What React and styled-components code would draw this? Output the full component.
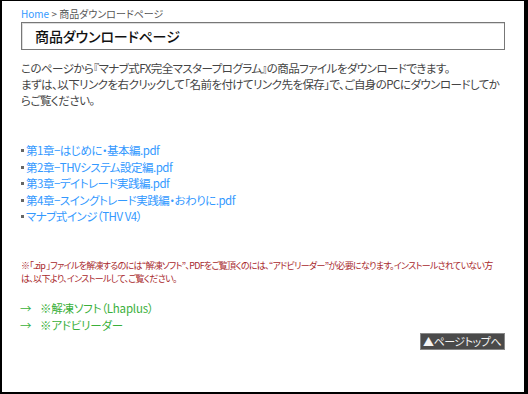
import React from 'react';
import styled, { createGlobalStyle } from 'styled-components';

const GlobalStyle = createGlobalStyle`
  html, body {
    margin: 0;
    padding: 0;
    background: #000;
  }
  body {
    font-family: "Noto Sans CJK JP", "Liberation Sans", sans-serif;
    font-feature-settings: "palt";
  }
`;

const Frame = styled.div`
  box-sizing: border-box;
  width: 528px;
  height: 394px;
  border-style: solid;
  border-color: #000;
  border-width: 1px 4px 2px 2px;
  background: #fff;
  padding: 6px 19px 0 18px;
  color: #444;
  overflow: hidden;
`;

const Breadcrumb = styled.div`
  font-size: 10px;
  line-height: 13px;
  color: #555;
  margin-left: 1px;

  a {
    color: #3399ff;
    text-decoration: none;
  }
`;

const Title = styled.h2`
  margin: 2px 0 0 1px;
  height: 28px;
  box-sizing: border-box;
  border: 1px solid #777;
  box-shadow: inset 1px 1px 0 #ddd;
  padding: 0 0 0 13px;
  font-size: 14px;
  font-weight: 500;
  line-height: 26px;
  color: #111;
  letter-spacing: -0.1px;
`;

const Lead = styled.p`
  margin: 10px 0 0 1px;
  font-size: 11.5px;
  line-height: 16px;
  letter-spacing: -0.55px;
  white-space: nowrap;
`;

const FileList = styled.ul`
  list-style: none;
  margin: 34px 0 0 1px;
  padding: 0;
  font-size: 11.5px;
  line-height: 16.5px;
  letter-spacing: -0.5px;
`;

const FileItem = styled.li`
  display: flex;
  align-items: center;

  &::before {
    content: '';
    width: 3px;
    height: 3px;
    background: #666;
    margin: 1px 2px 0 0;
  }

  a {
    color: #3399ff;
    text-decoration: none;
  }
`;

const Note = styled.p`
  margin: 34px 0 0 1px;
  font-size: 9px;
  line-height: 13px;
  color: #a8282c;
  letter-spacing: -0.7px;
  white-space: nowrap;
`;

const SoftList = styled.ul`
  list-style: none;
  margin: 15px 0 0 0;
  padding: 0;
  font-size: 11.5px;
  line-height: 17px;
  letter-spacing: -0.2px;
`;

const SoftItem = styled.li`
  color: #3ab03a;

  span {
    display: inline-block;
    width: 20px;
  }

  a {
    color: #3ab03a;
    text-decoration: none;
  }
`;

const TopBar = styled.div`
  display: flex;
  justify-content: flex-end;
  margin-top: -1px;
`;

const TopButton = styled.a`
  display: inline-block;
  background: #4a4a4a;
  border: 1px solid #888;
  color: #f4f4f4;
  font-size: 11px;
  line-height: 15px;
  letter-spacing: -0.5px;
  padding: 0 3px 0 2px;
  text-decoration: none;
`;

const files = [
  '第1章−はじめに・基本編.pdf',
  '第2章−THVシステム設定編.pdf',
  '第3章−デイトレード実践編.pdf',
  '第4章−スイングトレード実践編・おわりに.pdf',
  'マナブ式インジ（THV V4）',
];

const softs = ['※解凍ソフト（Lhaplus）', '※アドビリーダー'];

export default function App() {
  return (
    <>
      <GlobalStyle />
      <Frame>
        <Breadcrumb>
          <a href="#">Home</a> &gt; 商品ダウンロードページ
        </Breadcrumb>
        <Title>商品ダウンロードページ</Title>
        <Lead>
          このページから『マナブ式FX完全マスタープログラム』の商品ファイルをダウンロードできます。
          <br />
          まずは、以下リンクを右クリックして「名前を付けてリンク先を保存」で、ご自身のPCにダウンロードしてか
          <br />
          らご覧ください。
        </Lead>
        <FileList>
          {files.map((f) => (
            <FileItem key={f}>
              <a href="#">{f}</a>
            </FileItem>
          ))}
        </FileList>
        <Note>
          ※「.zip 」ファイルを解凍するのには“解凍ソフト”、PDFをご覧頂くのには、“アドビリーダー”が必要になります。インストールされていない方
          <br />
          は、以下より、インストールして、ご覧ください。
        </Note>
        <SoftList>
          {softs.map((s) => (
            <SoftItem key={s}>
              <span>→</span>
              <a href="#">{s}</a>
            </SoftItem>
          ))}
        </SoftList>
        <TopBar>
          <TopButton href="#">▲ページトップへ</TopButton>
        </TopBar>
      </Frame>
    </>
  );
}
